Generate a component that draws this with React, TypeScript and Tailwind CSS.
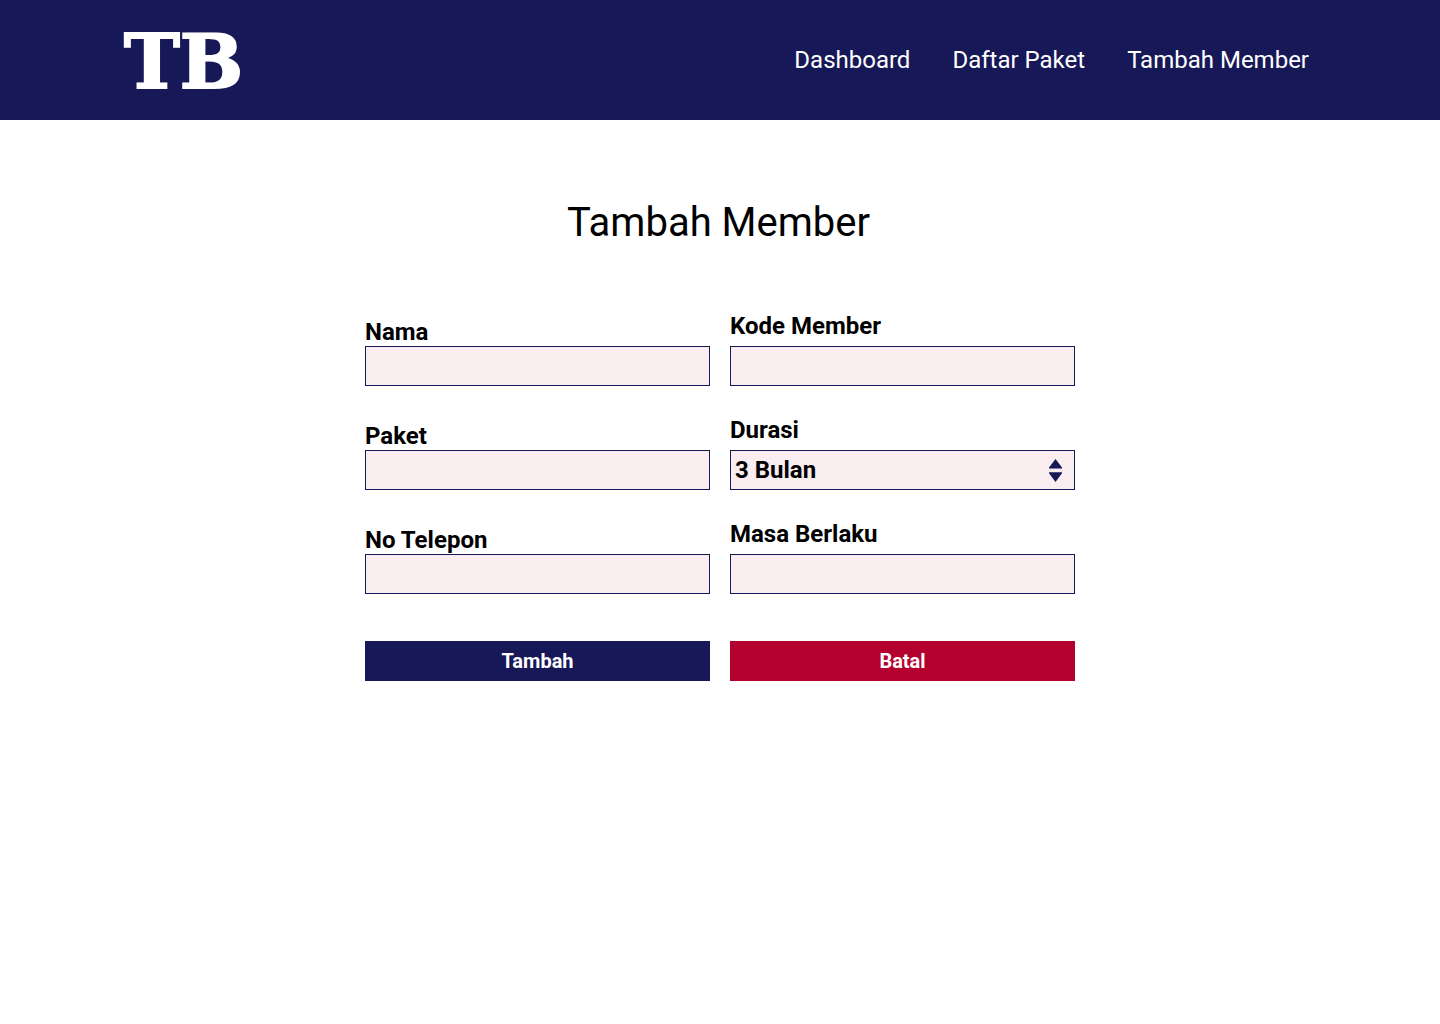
import React, { useId, useState } from "react";

const links = ["Dashboard", "Daftar Paket", "Tambah Member"];
const box = "block h-10 w-full appearance-none border border-[#171857] bg-[#f9edef] px-1 text-2xl font-bold text-black";

function Field({ label, lead }: { label: string; lead: string }) {
  const id = useId();
  return (
    <div className="flex flex-col">
      <label htmlFor={id} className={lead}>{label}</label>
      <input id={id} type="text" className={box} />
    </div>
  );
}

function Duration() {
  const id = useId();
  const [value, setValue] = useState("3 Bulan");
  return (
    <div className="flex flex-col">
      <label htmlFor={id} className="pb-1.5">Durasi</label>
      <div className="relative">
        <select id={id} value={value} onChange={(e) => setValue(e.target.value)} className={box}>
          <option>1 Bulan</option>
          <option>3 Bulan</option>
          <option>6 Bulan</option>
          <option>12 Bulan</option>
        </select>
        <svg viewBox="0 0 14 24" className="pointer-events-none absolute top-2 right-3 h-6 w-3.5 fill-[#171857]" aria-hidden="true">
          <path d="M6.5 1 L13 9.5 V10.5 H0 V9.5 Z M0 14.2 H13 V15.2 L6.5 24 L0 15.2 Z" />
        </svg>
      </div>
    </div>
  );
}

export default function App() {
  return (
    <div className="min-h-screen bg-white font-['Roboto',sans-serif] text-black">
      <header className="flex h-30 items-center justify-between bg-[#171857] pr-[131px] pl-[124px] text-white">
        <a href="#" className="pt-1 font-['DejaVu_Serif',serif] text-[75px] leading-none font-bold [-webkit-text-stroke:2px_white]">TB</a>
        <nav className="flex gap-[42px] text-2xl">
          {links.map((l) => (
            <a key={l} href="#">{l}</a>
          ))}
        </nav>
      </header>
      <main className="mx-auto max-w-[710px] pt-[79px]">
        <h1 className="pr-[3px] text-center text-[40px] leading-12">Tambah Member</h1>
        <form className="pt-[65px]" onSubmit={(e) => e.preventDefault()}>
          <div className="grid grid-cols-2 items-end gap-x-5 gap-y-[30px] text-2xl leading-7 font-bold">
            <Field label="Nama" lead="" />
            <Field label="Kode Member" lead="pb-1.5" />
            <Field label="Paket" lead="" />
            <Duration />
            <Field label="No Telepon" lead="" />
            <Field label="Masa Berlaku" lead="pb-1.5" />
          </div>
          <div className="grid grid-cols-2 gap-5 pt-[47px] text-xl font-bold text-white">
            <button type="submit" className="h-10 bg-[#171857]">Tambah</button>
            <button type="button" className="h-10 bg-[#b4002f]">Batal</button>
          </div>
        </form>
      </main>
    </div>
  );
}
